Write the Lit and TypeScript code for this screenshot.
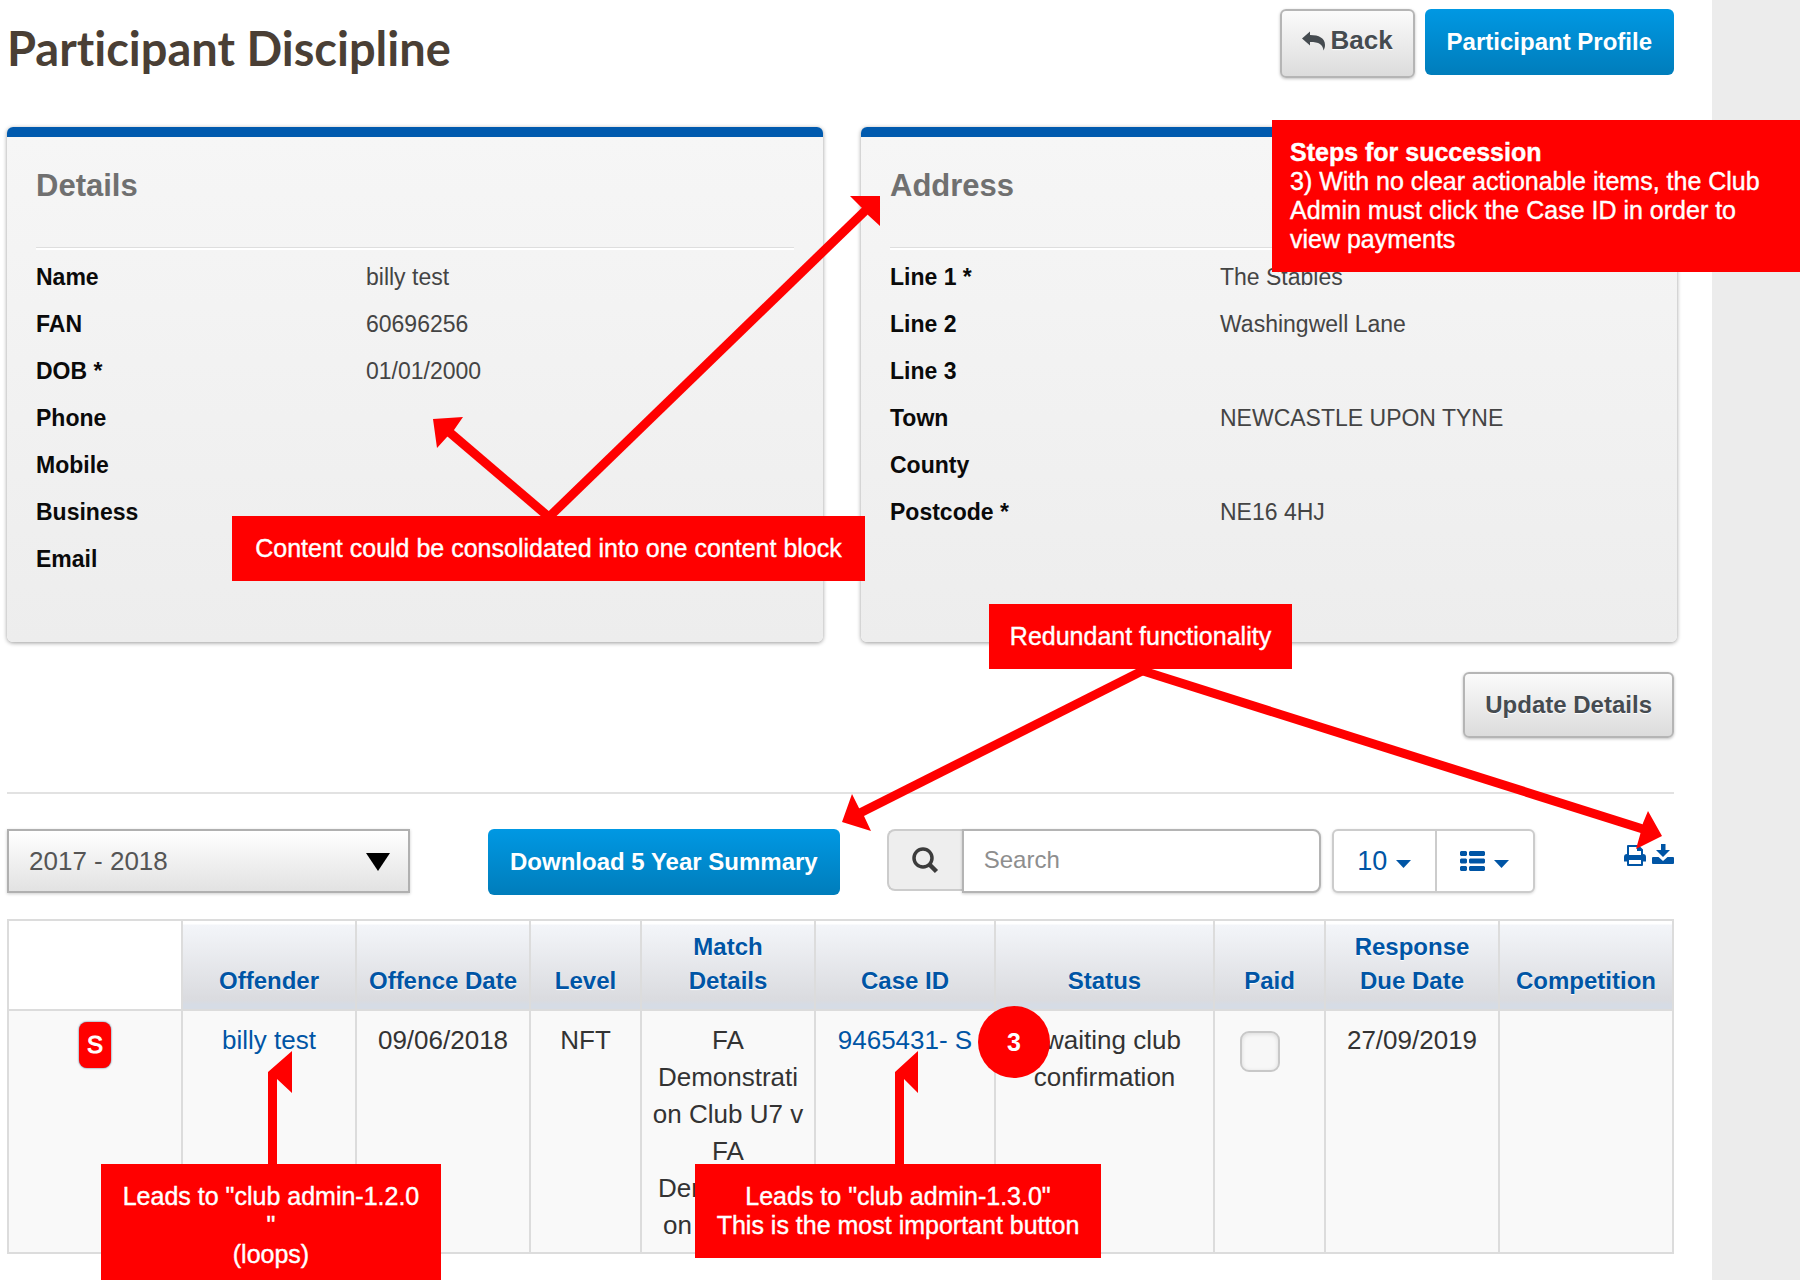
import { LitElement, html, svg, css } from "lit";
import { customElement, property } from "lit/decorators.js";

type Pair = [string, string];

const details: Pair[] = [
  ["Name", "billy test"],
  ["FAN", "60696256"],
  ["DOB *", "01/01/2000"],
  ["Phone", ""],
  ["Mobile", ""],
  ["Business", ""],
  ["Email", ""],
];

const address: Pair[] = [
  ["Line 1 *", "The Stables"],
  ["Line 2", "Washingwell Lane"],
  ["Line 3", ""],
  ["Town", "NEWCASTLE UPON TYNE"],
  ["County", ""],
  ["Postcode *", "NE16 4HJ"],
];

const columns = [
  "Offender",
  "Offence Date",
  "Level",
  "Match Details",
  "Case ID",
  "Status",
  "Paid",
  "Response Due Date",
  "Competition",
];

@customElement("info-card")
class InfoCard extends LitElement {
  @property() heading = "";
  @property({ attribute: false }) rows: Pair[] = [];

  static styles = css`
    :host {
      display: block;
      box-sizing: border-box;
      border-top: 10px solid #005aae;
      border-radius: 6px;
      padding: 0 29px 59px;
      background: linear-gradient(#f6f6f6, #ededed);
      box-shadow: 0 1px 4px rgba(0, 0, 0, 0.4);
    }
    .heading {
      margin: 0;
      padding: 30px 0 42px;
      font-size: 31px;
      line-height: 38px;
      font-weight: bold;
      color: #707070;
      border-bottom: 1px solid #dedede;
      box-shadow: 0 2px 0 #fff;
    }
    .rows {
      margin: 0;
      padding-top: 6px;
    }
    .row {
      display: grid;
      grid-template-columns: 330px 1fr;
      font-size: 23px;
      line-height: 47px;
      min-height: 47px;
    }
    .label {
      font-weight: bold;
      color: #0a0a0a;
    }
    .value {
      margin: 0;
      color: #444;
    }
  `;

  render() {
    return html`
      <h2 class="heading">${this.heading}</h2>
      <dl class="rows">
        ${this.rows.map(
          ([label, value]) => html`<div class="row">
            <dt class="label">${label}</dt>
            <dd class="value">${value}</dd>
          </div>`
        )}
      </dl>
    `;
  }
}

@customElement("review-notes")
class ReviewNotes extends LitElement {
  static styles = css`
    :host {
      position: absolute;
      inset: 0;
      overflow: hidden;
      pointer-events: none;
    }
    .arrows {
      position: absolute;
      left: 0;
      top: 0;
      width: 1800px;
      height: 1280px;
      fill: red;
      stroke: none;
    }
    .shaft {
      stroke: red;
      stroke-width: 9;
    }
    .note {
      position: absolute;
      box-sizing: border-box;
      margin: 0;
      padding: 18px;
      background: red;
      color: #fff;
      font-size: 25px;
      line-height: 29px;
      text-align: center;
      -webkit-text-stroke: 0.4px #fff;
    }
    .steps {
      left: 1272px;
      top: 120px;
      width: 528px;
      text-align: left;
    }
    .consolidate {
      left: 232px;
      top: 516px;
      width: 633px;
    }
    .redundant {
      left: 989px;
      top: 604px;
      width: 303px;
    }
    .offender {
      left: 101px;
      top: 1164px;
      width: 340px;
    }
    .case {
      left: 695px;
      top: 1164px;
      width: 406px;
    }
    .marker {
      position: absolute;
      left: 978px;
      top: 1006px;
      width: 72px;
      height: 72px;
      border-radius: 50%;
      background: red;
      color: #fff;
      font-size: 25px;
      font-weight: bold;
      line-height: 72px;
      text-align: center;
    }
  `;

  render() {
    const arrows = svg`
      <line class="shaft" x1="550" y1="518" x2="448" y2="431"></line>
      <path d="M433 419L463 417L454 430L447 437L437 448Z"></path>
      <line class="shaft" x1="548" y1="518" x2="868" y2="208"></line>
      <path d="M880 196L850 196L862 208L868 215L880 226Z"></path>
      <line class="shaft" x1="1144" y1="670" x2="858" y2="814"></line>
      <path d="M842 822L852 794L859 808L864 816L871 831Z"></path>
      <line class="shaft" x1="1140" y1="670" x2="1646" y2="830"></line>
      <path d="M1662 836L1648 811L1643 823L1640 835L1636 849Z"></path>
      <path d="M268 1164V1072L292 1051V1093L277 1079V1164Z"></path>
      <path d="M895 1164V1072L918 1051V1093L904 1079V1164Z"></path>
    `;
    return html`
      <svg class="arrows" viewBox="0 0 1800 1280" aria-hidden="true">${arrows}</svg>
      <p class="note steps">
        <b>Steps for succession</b><br />3) With no clear actionable items, the Club Admin must click
        the Case ID in order to view payments
      </p>
      <p class="note consolidate">Content could be consolidated into one content block</p>
      <p class="note redundant">Redundant functionality</p>
      <p class="note offender">Leads to "club admin-1.2.0<br />"<br />(loops)</p>
      <p class="note case">Leads to "club admin-1.3.0"<br />This is the most important button</p>
      <span class="marker">3</span>
    `;
  }
}

@customElement("app-root")
class AppRoot extends LitElement {
  static styles = css`
    :host {
      display: grid;
      grid-template-columns: 1fr 88px;
      position: relative;
      min-height: 100vh;
      font-family: "Liberation Sans", Arial, sans-serif;
      background: #ececec;
    }
    .page {
      box-sizing: border-box;
      min-width: 0;
      padding: 9px 38px 24px 7px;
      background: #fff;
    }
    .header {
      display: flex;
      justify-content: space-between;
      align-items: flex-start;
      height: 118px;
    }
    .title {
      margin: 9px 0 0;
      font-family: Lato, "Open Sans", sans-serif;
      font-size: 47px;
      line-height: 60px;
      font-weight: bold;
      font-variant-ligatures: none;
      color: #4a3f35;
    }
    .actions {
      display: flex;
      gap: 10px;
      align-items: flex-start;
    }
    .button {
      display: flex;
      align-items: center;
      justify-content: center;
      box-sizing: border-box;
      height: 66px;
      margin: 0;
      padding: 0 20px;
      border: 2px solid #b5b5b5;
      border-radius: 6px;
      background: linear-gradient(#fbfbfb, #dcdcdc);
      box-shadow: 0 1px 3px rgba(0, 0, 0, 0.25);
      color: #454b50;
      font: bold 24px "Liberation Sans", Arial, sans-serif;
      text-shadow: 0 1px 1px #fff;
    }
    .primary {
      border-color: transparent;
      background: linear-gradient(#0098e3, #007dbb) border-box;
      box-shadow: none;
      color: #fff;
      text-shadow: none;
    }
    .back {
      gap: 4px;
      height: 69px;
      padding: 0 20px 6px;
      font-size: 26px;
    }
    .cards {
      display: grid;
      grid-template-columns: 1fr 1fr;
      gap: 38px;
      margin-right: -3px;
    }
    .update {
      display: flex;
      justify-content: flex-end;
      padding: 30px 0 54px;
      border-bottom: 2px solid #e2e2e2;
    }
    .toolbar {
      display: flex;
      align-items: flex-start;
      padding: 35px 0 24px;
    }
    .season {
      position: relative;
      width: 403px;
      margin-right: 78px;
    }
    .select {
      appearance: none;
      display: block;
      box-sizing: border-box;
      width: 100%;
      height: 64px;
      padding: 0 20px;
      border: 2px solid #b0b0b0;
      border-radius: 0;
      background: linear-gradient(#fff, #e2e2e2);
      box-shadow: 0 1px 3px rgba(0, 0, 0, 0.2);
      color: #555;
      font: 26px "Liberation Sans", Arial, sans-serif;
    }
    .chevron {
      position: absolute;
      right: 20px;
      top: 24px;
      width: 24px;
      height: 18px;
    }
    .search {
      display: flex;
      align-items: flex-start;
      flex: 1;
      max-width: 434px;
      margin: 0 11px 0 47px;
    }
    .addon {
      display: flex;
      align-items: center;
      justify-content: center;
      box-sizing: border-box;
      width: 75px;
      height: 62px;
      border: 2px solid #ccc;
      border-right: 0;
      border-radius: 8px 0 0 8px;
      background: #eee;
    }
    .input {
      flex: 1;
      min-width: 0;
      box-sizing: border-box;
      height: 64px;
      padding: 0 20px 2px;
      border: 2px solid #b4b4b4;
      border-radius: 0 8px 8px 0;
      box-shadow: 0 1px 3px rgba(0, 0, 0, 0.2);
      font: 24px "Liberation Sans", Arial, sans-serif;
    }
    .input::placeholder {
      color: #8e8e8e;
      opacity: 1;
    }
    .group {
      display: flex;
      box-sizing: border-box;
      height: 64px;
      border: 2px solid #ccc;
      border-radius: 6px;
      background: #fff;
      box-shadow: 0 1px 3px rgba(0, 0, 0, 0.15);
    }
    .menu {
      display: flex;
      align-items: center;
      justify-content: center;
      gap: 9px;
      width: 101px;
      padding: 0;
      border: 0;
      background: none;
      color: #0055a5;
      font: 27px "Liberation Sans", Arial, sans-serif;
    }
    .menu + .menu {
      width: 98px;
      border-left: 2px solid #ccc;
    }
    .caret {
      width: 15px;
      height: 8px;
      margin-top: 5px;
      fill: #0055a5;
    }
    .tools {
      display: flex;
      gap: 6px;
      margin-left: auto;
      padding-top: 14px;
    }
    .tool {
      display: block;
      padding: 0;
      border: 0;
      background: none;
      line-height: 0;
    }
    .ink {
      fill: #0055a5;
    }
    .cases {
      width: 100%;
      border-collapse: collapse;
      table-layout: fixed;
    }
    .w-s {
      width: 111px;
    }
    .w-m {
      width: 174px;
    }
    .w-c {
      width: 180px;
    }
    .w-l {
      width: 219px;
    }
    .th {
      box-sizing: border-box;
      height: 90px;
      padding: 0 10px 11px;
      border: 2px solid #dcdcdc;
      background: linear-gradient(#fff 3px, #f3f5f9 4px, #dadbdf 90%, #d6dce5 95%);
      color: #0055a5;
      font-size: 24px;
      line-height: 34px;
      vertical-align: bottom;
      text-shadow: 0 1px 1px #fff;
    }
    .blank {
      background: #fff;
    }
    .td {
      padding: 11px 10px 8px;
      border: 2px solid #dcdcdc;
      background: #f9f9f9;
      color: #333;
      font-size: 26px;
      line-height: 37px;
      text-align: center;
      vertical-align: top;
      overflow-wrap: break-word;
    }
    .link {
      color: #0055a5;
      text-decoration: none;
    }
    .badge {
      display: inline-block;
      width: 32px;
      border-radius: 8px;
      background: red;
      box-shadow: 0 0 2px #357;
      color: #fff;
      font-size: 24px;
      line-height: 46px;
      -webkit-text-stroke: 1px #fff;
      vertical-align: top;
    }
    .check {
      appearance: none;
      box-sizing: border-box;
      width: 40px;
      height: 41px;
      margin: 9px 20px 0 0;
      border: 2px solid #c8c8c8;
      border-radius: 9px;
      background: #f7f7f7;
      box-shadow: inset 0 1px 4px rgba(0, 0, 0, 0.12);
      vertical-align: top;
    }
  `;

  private caret() {
    return html`<svg class="caret" viewBox="0 0 15 8" aria-hidden="true"><path d="M0 0H15L7.500 8Z"></path></svg>`;
  }

  render() {
    return html`
      <main class="page">
        <header class="header">
          <h1 class="title">Participant Discipline</h1>
          <div class="actions">
            <button class="button back" type="button">
              <svg width="24" height="22" viewBox="0 0 24 22" aria-hidden="true">
                <path
                  fill="#454b50"
                  d="M0 8.500L8 1.500V5C17 5 23 8 23 15C23 17 22.500 18.500 21.500 20.500C21 14.500 17 12 8 12V15.500Z"
                ></path>
              </svg>
              Back
            </button>
            <button class="button primary" type="button">Participant Profile</button>
          </div>
        </header>

        <section class="cards">
          <info-card heading="Details" .rows=${details}></info-card>
          <info-card heading="Address" .rows=${address}></info-card>
        </section>

        <div class="update">
          <button class="button" type="button">Update Details</button>
        </div>

        <div class="toolbar">
          <div class="season">
            <select class="select" aria-label="Season">
              <option>2017 - 2018</option>
            </select>
            <svg class="chevron" viewBox="0 0 24 18" aria-hidden="true"><path d="M0 0H24L12 18Z"></path></svg>
          </div>
          <button class="button primary" type="button">Download 5 Year Summary</button>
          <div class="search">
            <label class="addon" for="search" aria-label="Search">
              <svg width="28" height="28" viewBox="0 0 28 28" fill="none" stroke="#3c3c3c" aria-hidden="true">
                <circle cx="12" cy="12" r="9" stroke-width="3.500"></circle>
                <path d="M18.500 18.500L25.500 25.500" stroke-width="4.500"></path>
              </svg>
            </label>
            <input class="input" id="search" type="text" placeholder="Search" />
          </div>
          <div class="group">
            <button class="menu" type="button">10 ${this.caret()}</button>
            <button class="menu" type="button" aria-label="Columns">
              <svg class="ink" width="25" height="20" viewBox="0 0 25 20" aria-hidden="true">
                <path d="M1 0H6L7 1V4L6 5H1L0 4V1ZM10 0H24L25 1V4L24 5H10L9 4V1ZM1 7.500H6L7 8.500V11.500L6 12.500H1L0 11.500V8.500ZM10 7.500H24L25 8.500V11.500L24 12.500H10L9 11.500V8.500ZM1 15H6L7 16V19L6 20H1L0 19V16ZM10 15H24L25 16V19L24 20H10L9 19V16Z"></path>
              </svg>
              ${this.caret()}
            </button>
          </div>
          <div class="tools">
            <button class="tool" type="button" aria-label="Print">
              <svg class="ink" width="22" height="24" viewBox="0 0 22 24" aria-hidden="true">
                <path
                  fill-rule="evenodd"
                  d="M3 3Q3 2 4 2H14.500L19 6.500V11Q22 11 22 14V18.500H19V22Q19 23 18 23H4Q3 23 3 22V18.500H0V14Q0 11 3 11ZM5 4V12H17V8H13V4ZM5 17V21H17V17Z"
                ></path>
              </svg>
            </button>
            <button class="tool" type="button" aria-label="Download">
              <svg class="ink" width="22" height="24" viewBox="0 0 22 24" aria-hidden="true">
                <path d="M9 1H13.500V7H18L11 14L4 7H9ZM1 14H6.500L11 18L15.500 14H21Q22 14 22 15V20Q22 21 21 21H1Q0 21 0 20V15Q0 14 1 14Z"></path>
              </svg>
            </button>
          </div>
        </div>

        <table class="cases">
          <colgroup>
            <col class="w-m" />
            <col class="w-m" />
            <col class="w-m" />
            <col class="w-s" />
            <col class="w-m" />
            <col class="w-c" />
            <col class="w-l" />
            <col class="w-s" />
            <col class="w-m" />
            <col class="w-m" />
          </colgroup>
          <thead>
            <tr>
              <td class="th blank"></td>
              ${columns.map((name) => html`<th class="th" scope="col">${name}</th>`)}
            </tr>
          </thead>
          <tbody>
            <tr>
              <td class="td"><span class="badge">S</span></td>
              <td class="td"><a class="link" href="#offender">billy test</a></td>
              <td class="td">09/06/2018</td>
              <td class="td">NFT</td>
              <td class="td">FA Demonstration Club U7 v FA Demonstration Club U7</td>
              <td class="td"><a class="link" href="#case">9465431- S</a></td>
              <td class="td">Awaiting club confirmation</td>
              <td class="td"><input class="check" type="checkbox" aria-label="Paid" /></td>
              <td class="td">27/09/2019</td>
              <td class="td"></td>
            </tr>
          </tbody>
        </table>
      </main>
      <review-notes></review-notes>
    `;
  }
}
